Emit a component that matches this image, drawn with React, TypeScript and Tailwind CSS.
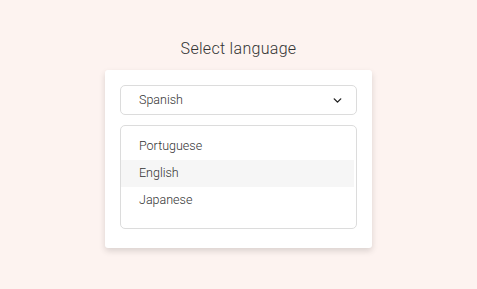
import { ChevronDown } from 'lucide-react'

const languages = ['Portuguese', 'English', 'Japanese']

export default function App() {
  const active = 'English'

  return (
    <div
      className="w-full h-[289px] bg-[#fdf3f0] flex flex-col items-center pt-[38px]"
      style={{ fontFamily: 'Roboto, "Noto Sans", sans-serif' }}
    >
      <h1 className="text-[16px] leading-[22px] font-light text-[#333] tracking-[0.3px]">Select language</h1>

      <div className="mt-[10px] w-[267px] bg-white rounded-[3px] shadow-[0_3px_6px_rgba(0,0,0,0.14)] px-[15px] pt-[15px] pb-[19px]">
        <button
          type="button"
          className="w-full h-[30px] flex items-center justify-between pl-[18px] pr-[12px] border border-[#dcdcdc] rounded-[5px] text-[12.5px] font-light text-[#333]"
        >
          <span>Spanish</span>
          <ChevronDown size={13} strokeWidth={2.6} className="text-[#222]" />
        </button>

        <ul className="mt-[10px] h-[104px] border border-[#dcdcdc] rounded-[5px] pt-[7px] pr-[2px]">
          {languages.map((lang) => (
            <li
              key={lang}
              className={
                'h-[27px] flex items-center pl-[18px] text-[12.5px] font-light text-[#333] ' +
                (lang === active ? 'bg-[#f6f6f6]' : '')
              }
            >
              {lang}
            </li>
          ))}
        </ul>
      </div>
    </div>
  )
}
